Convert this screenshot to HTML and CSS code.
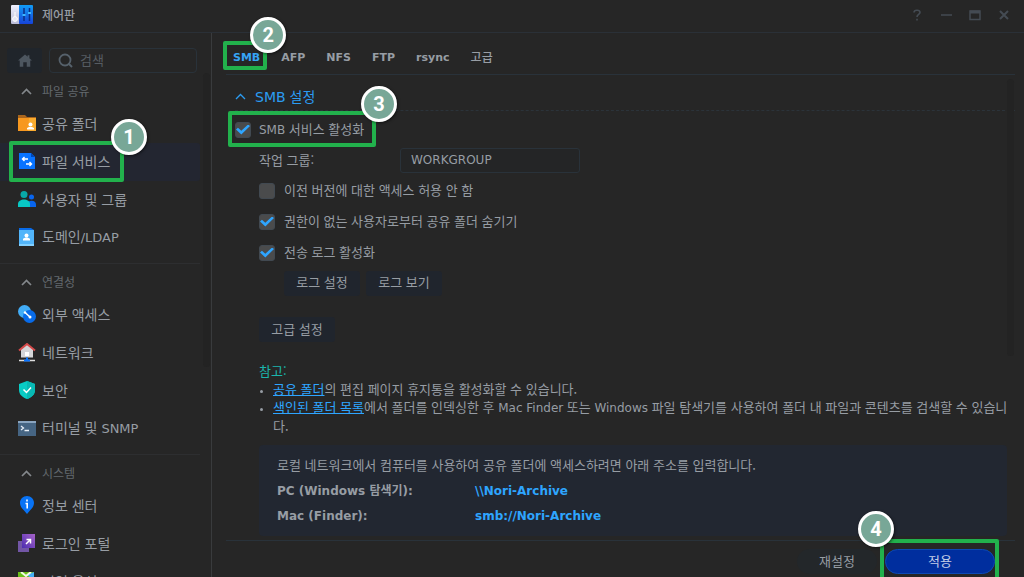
FILE: index.html
```html
<!DOCTYPE html>
<html lang="ko">
<head>
  <meta charset="UTF-8">
  <meta name="viewport" content="width=device-width, initial-scale=1.0">
  <title>제어판</title>
  <link rel="stylesheet" href="styles.css">
</head>
<body>
  <header class="titlebar">
    <svg class="app-icon" width="22" height="20" viewBox="0 0 22 20">
      <defs>
        <linearGradient id="appBlue" x1="0" y1="0" x2="0" y2="1"><stop offset="0" stop-color="#119cf5"/><stop offset="1" stop-color="#1743d8"/></linearGradient>
        <linearGradient id="appWhite" x1="0" y1="0" x2="0" y2="1"><stop offset="0" stop-color="#f0f1ff"/><stop offset="1" stop-color="#b9bbd6"/></linearGradient>
      </defs>
      <rect x="0" y="0" width="9" height="19" rx="1" fill="url(#appWhite)"/>
      <rect x="8" y="0" width="14" height="19" rx="1" fill="url(#appBlue)"/>
      <path d="M4 7v5" stroke="#fff" stroke-width="1"/>
      <circle cx="4" cy="14" r="2.4" fill="#e4e5f4" stroke="#fff"/>
      <path d="M13 3v13M18.500 3v13" stroke="#0c2c83" stroke-width="1.500"/>
      <path d="M11.500 10h3M17 8h3" stroke="#3db8ff" stroke-width="2"/>
    </svg>
    <h1>제어판</h1>
    <div class="window-buttons">
      <button type="button" aria-label="도움말"><svg width="12" height="12" viewBox="0 0 12 12"><path d="M3 3.500C3 .5 9 .5 9 3.500c0 2-3 2-3 4.500M6 9.800v1.600" fill="none" stroke="currentColor" stroke-width="1.600"/></svg></button>
      <button type="button" aria-label="최소화"><svg width="12" height="12" viewBox="0 0 12 12"><path d="M1 6h11" stroke="currentColor" stroke-width="1.500"/></svg></button>
      <button type="button" aria-label="최대화"><svg width="12" height="12" viewBox="0 0 12 12"><path d="M1 2h10v8.500H1z" fill="none" stroke="currentColor" stroke-width="1.500"/><path d="M1 3h10" stroke="currentColor" stroke-width="3"/></svg></button>
      <button type="button" aria-label="닫기"><svg width="12" height="12" viewBox="0 0 12 12"><path d="M2 2l8 8M10 2l-8 8" stroke="currentColor" stroke-width="2"/></svg></button>
    </div>
  </header>

  <div class="window">
    <aside class="sidebar">
      <div class="toolbar">
        <button type="button" class="home" aria-label="홈"><svg width="14" height="13" viewBox="0 0 16 14"><path d="M8 0L0 7h2v7h4V9h4v5h4V7h2l-3-2.600V1h-2v1.600z" fill="currentColor"/></svg></button>
        <label class="search">
          <svg width="15" height="15" viewBox="0 0 15 15"><circle cx="7" cy="7" r="5.500" fill="none" stroke="currentColor" stroke-width="1.800"/><path d="M10.500 10.500l3.500 3.500" stroke="currentColor" stroke-width="2"/></svg>
          <input type="search" placeholder="검색" aria-label="검색">
        </label>
      </div>

      <nav class="menu">
        <section>
          <h2><svg width="11" height="7" viewBox="0 0 11 7"><path d="M1 6l4.500-4.500L10 6" fill="none" stroke="currentColor" stroke-width="1.700"/></svg>파일 공유</h2>
          <a href="#share">
            <svg width="18" height="18" viewBox="0 0 18 18"><path d="M0 1h7l2 2h9v3H0z" fill="#a9651d"/><path d="M0 4h18v13H0z" fill="#f7981f"/><path d="M11 4h7v13h-8z" fill="#faac2f"/><circle cx="12.500" cy="10.500" r="2" fill="#fff"/><path d="M9 15.500v-1.500c1-1.500 6-1.500 7 0v1.500z" fill="#fff"/></svg>
            공유 폴더</a>
          <a href="#service" class="active">
            <svg width="18" height="18" viewBox="0 0 18 18"><path d="M1 2V1h8v2z" fill="#0750c5"/><path d="M1 1h12l4 4v12H1z" fill="#0873ff"/><path d="M13 1l4 4h-4z" fill="#0047b8"/><path d="M10 7H5M6.500 5L4.500 7l2 2M8 12h5M11.500 10l2 2-2 2" fill="none" stroke="#fff" stroke-width="1.400"/></svg>
            파일 서비스
            <span class="callout callout-menu"><b class="badge">1</b></span></a>
          <a href="#users">
            <svg width="18" height="18" viewBox="0 0 18 18"><circle cx="13.500" cy="7" r="2.500" fill="#0865ef"/><path d="M10 17v-5c4-2.500 8-.5 8 2.500V17z" fill="#0865ef"/><circle cx="6" cy="4.500" r="3.500" fill="#08a8a8"/><path d="M0 17v-3c0-6 12-6 12 0v3z" fill="#08c8c4"/></svg>
            사용자 및 그룹</a>
          <a href="#domain">
            <svg width="18" height="18" viewBox="0 0 18 18"><path d="M1 0h12l3 2v15H1z" fill="#086be8"/><path d="M1 2h15v16H1z" fill="#52b5fa"/><path d="M1 16h15v2H1z" fill="#83d0ff"/><circle cx="8.500" cy="7.500" r="2" fill="#fff"/><path d="M5 12.500V11c1.500-2 5.500-2 7 0v1.500z" fill="#fff"/></svg>
            <span>도메인<span class="latin">/LDAP</span></span></a>
        </section>

        <section>
          <h2><svg width="11" height="7" viewBox="0 0 11 7"><path d="M1 6l4.500-4.500L10 6" fill="none" stroke="currentColor" stroke-width="1.700"/></svg>연결성</h2>
          <a href="#external">
            <svg width="18" height="18" viewBox="0 0 18 18"><circle cx="6.500" cy="6.500" r="6.500" fill="#42adf7"/><circle cx="11.500" cy="11.500" r="6.500" fill="#086be9"/><path d="M7 7.500l5 4.500" stroke="#fff" stroke-width="1.500"/><circle cx="7" cy="7.500" r="1.200" fill="#fff"/><circle cx="12" cy="12" r="1.500" fill="#fff"/></svg>
            외부 액세스</a>
          <a href="#network">
            <svg width="18" height="19" viewBox="0 0 18 19"><path d="M3 6l6-5 6 5v8.500H3z" fill="#d4d5d8"/><path d="M1 7.500L9 1l8 6.500" fill="none" stroke="#d54a4a" stroke-width="2"/><path d="M7 9h4v4H7z" fill="#fff"/><path d="M1 17.500h16" stroke="#ddd" stroke-width="1.500"/><path d="M8 14.500h2v2h2v2H6v-2h2z" fill="#0873ff"/></svg>
            네트워크</a>
          <a href="#security">
            <svg width="18" height="18" viewBox="0 0 18 18"><path d="M9 0l8 3v6c0 5-4 7.500-8 9-4-1.500-8-4-8-9V3z" fill="#09ccc5"/><path d="M9 0l8 3v6c0 5-4 7.500-8 9z" fill="#08b9b4"/><path d="M5.500 8.500L8.500 11.500l4.500-5" fill="none" stroke="#fff" stroke-width="1.500"/></svg>
            보안</a>
          <a href="#terminal">
            <svg width="18" height="18" viewBox="0 0 18 18"><path d="M0 2h18v15H0z" fill="#466583"/><path d="M0 2h18v2H0z" fill="#8aa5c0"/><path d="M3 7l2.500 2L3 11M6.500 11.500H11" fill="none" stroke="#e6edf5" stroke-width="1.300"/></svg>
            <span>터미널 및 <span class="latin">SNMP</span></span></a>
        </section>

        <section>
          <h2><svg width="11" height="7" viewBox="0 0 11 7"><path d="M1 6l4.500-4.500L10 6" fill="none" stroke="currentColor" stroke-width="1.700"/></svg>시스템</h2>
          <a href="#info">
            <svg width="18" height="18" viewBox="0 0 18 18"><path d="M9 0c4 0 7 3 7 7 0 3.500-2.500 6-4.500 8L9 18l-2.500-3C4.500 13 2 10.500 2 7c0-4 3-7 7-7z" fill="#0873f5"/><path d="M9 3.500v2M7.500 7.500H9.200V12.500" fill="none" stroke="#fff" stroke-width="1.600"/></svg>
            정보 센터</a>
          <a href="#portal">
            <svg width="18" height="18" viewBox="0 0 18 18"><defs><linearGradient id="portal" x1="0" y1="1" x2="1" y2="0"><stop offset="0" stop-color="#4b2db0"/><stop offset="1" stop-color="#a763c8"/></linearGradient></defs><path d="M0 7h11v11H0z" fill="#7256a5"/><path d="M4 0h13v14H4z" fill="url(#portal)"/><path d="M8 10l4.500-4.500M8.500 5.500h4v4" fill="none" stroke="#fff" stroke-width="1.500"/></svg>
            로그인 포털</a>
          <a href="#region">
            <svg width="18" height="18" viewBox="0 0 18 18"><path d="M0 0h16v17H0z" fill="#69bd18"/><path d="M9 3l7-3v8z" fill="#45aef5"/><path d="M3 0l5 4 5-4" fill="none" stroke="#f3f8e6" stroke-width="2"/></svg>
            지역 옵션</a>
        </section>
      </nav>
      <div class="scrollbar"></div>
    </aside>

    <main class="content">
      <nav class="tabs">
        <a href="#smb" class="active">SMB<span class="callout callout-tab"><b class="badge">2</b></span></a>
        <a href="#afp">AFP</a>
        <a href="#nfs">NFS</a>
        <a href="#ftp">FTP</a>
        <a href="#rsync">rsync</a>
        <a href="#advanced">고급</a>
      </nav>

      <form class="panel">
        <h2><svg width="11" height="7" viewBox="0 0 11 7"><path d="M1 6l4.500-4.500L10 6" fill="none" stroke="currentColor" stroke-width="1.300"/></svg><span><span class="latin">SMB</span> 설정</span></h2>

        <div class="row check">
          <input type="checkbox" id="smb" checked>
          <label for="smb"><span class="latin">SMB</span> 서비스 활성화</label>
          <span class="callout callout-check"><b class="badge">3</b></span>
        </div>
        <div class="options">
          <div class="row field">
            <label for="workgroup">작업 그룹:</label>
            <input type="text" id="workgroup" value="WORKGROUP">
          </div>
          <div class="row check">
            <input type="checkbox" id="previous">
            <label for="previous">이전 버전에 대한 액세스 허용 안 함</label>
          </div>
          <div class="row check">
            <input type="checkbox" id="hide" checked>
            <label for="hide">권한이 없는 사용자로부터 공유 폴더 숨기기</label>
          </div>
          <div class="row check">
            <input type="checkbox" id="log" checked>
            <label for="log">전송 로그 활성화</label>
          </div>
          <div class="row log-buttons">
            <button type="button" class="button">로그 설정</button>
            <button type="button" class="button">로그 보기</button>
          </div>
          <button type="button" class="button advanced">고급 설정</button>

          <div class="note">
            <strong>참고:</strong>
            <ul>
              <li><a href="#share">공유 폴더</a>의 편집 페이지 휴지통을 활성화할 수 있습니다.</li>
              <li><a href="#index">색인된 폴더 목록</a>에서 폴더를 인덱싱한 후 <span class="latin">Mac Finder</span> 또는 <span class="latin">Windows</span> 파일 탐색기를 사용하여 폴더 내 파일과 콘텐츠를 검색할 수 있습니다.</li>
            </ul>
          </div>

          <div class="address">
            <p>로컬 네트워크에서 컴퓨터를 사용하여 공유 폴더에 액세스하려면 아래 주소를 입력합니다.</p>
            <dl>
              <dt>PC (Windows 탐색기):</dt>
              <dd>\\Nori-Archive</dd>
              <dt>Mac (Finder):</dt>
              <dd>smb://Nori-Archive</dd>
            </dl>
          </div>
        </div>
      </form>

      <footer class="actions">
        <button type="button" class="button reset">재설정</button>
        <div class="apply-wrap">
          <button type="button" class="button apply">적용</button>
          <span class="callout callout-apply"><b class="badge">4</b></span>
        </div>
      </footer>
      <div class="scrollbar"></div>
    </main>
  </div>
</body>
</html>
```
FILE: styles.css
```css
* {
  box-sizing: border-box;
}
body {
  display: flex;
  flex-direction: column;
  height: 100vh;
  margin: 0;
  overflow: hidden;
  background: #262626;
  color: #979da4;
  font: 13px/18px "Noto Sans CJK KR", sans-serif;
}
h1, h2, p, ul, dl, dd {
  margin: 0;
  padding: 0;
}
svg {
  flex-shrink: 0;
}
a {
  color: inherit;
  text-decoration: none;
}
button, input {
  font: inherit;
  color: inherit;
}
button {
  padding: 0;
  border: 0;
  background: none;
}
.latin {
  font-family: "DejaVu Sans", sans-serif;
  font-size: 12px;
}

/* title bar */
.titlebar {
  display: flex;
  flex-shrink: 0;
  align-items: center;
  gap: 9px;
  height: 33px;
  padding: 0 14px 2px 11px;
  border-bottom: 1px solid #2a3037;
}
.titlebar h1 {
  font-size: 12px;
  font-weight: 500;
}
.window-buttons {
  display: flex;
  gap: 17px;
  margin-left: auto;
  color: #444b53;
}
.window-buttons button {
  display: flex;
}

/* sidebar */
.window {
  display: flex;
  flex: 1;
  min-height: 0;
}
.sidebar {
  position: relative;
  flex: 0 0 212px;
  border-right: 1px solid #393b3d;
}
.toolbar {
  display: flex;
  gap: 7px;
  padding: 15px 14px 4px 7px;
}
.home {
  display: flex;
  align-items: center;
  justify-content: center;
  width: 35px;
  height: 25px;
  border-radius: 3px;
  background: #20252b;
  color: #4d565f;
}
.search {
  display: flex;
  flex: 1;
  align-items: center;
  gap: 7px;
  height: 25px;
  padding: 0 8px;
  border: 1px solid #29323a;
  border-radius: 4px;
  color: #56616b;
}
.search input {
  width: 100%;
  padding: 0 0 2px;
  border: 0;
  outline: 0;
  background: none;
}
.search input::placeholder {
  color: #565c62;
}
.menu section {
  margin-right: 11px;
}
.menu section + section {
  margin-top: 6px;
  padding-top: 4px;
  border-top: 1px solid #2d2e30;
}
.menu h2 {
  display: flex;
  align-items: center;
  gap: 10px;
  height: 28px;
  padding-left: 21px;
  color: #63696e;
  font-size: 12px;
  font-weight: 400;
}
.menu h2 svg {
  width: 11px;
  color: #84888c;
}
.menu a {
  position: relative;
  display: flex;
  align-items: center;
  gap: 6px;
  height: 38px;
  padding: 0 0 2px 18px;
  border-radius: 0 3px 3px 0;
  font-size: 14px;
}
.menu .latin {
  font-size: 13px;
}
.menu a.active {
  background: #232631;
}
.scrollbar {
  position: absolute;
  top: 40px;
  right: 1px;
  width: 7px;
  height: 54%;
  border-radius: 4px;
  background: #232323;
}

/* main area */
.content {
  position: relative;
  display: flex;
  flex: 1;
  flex-direction: column;
  min-width: 0;
  padding: 0 9px 0 14px;
}
.tabs {
  display: flex;
  flex-shrink: 0;
  gap: 21px;
  height: 42px;
  padding: 7px 7px 0;
  border-bottom: 1px solid #29323a;
  font: bold 11px/36px "DejaVu Sans", "Noto Sans CJK KR", sans-serif;
}
.tabs a {
  position: relative;
}
.tabs a:last-child {
  font-size: 12px;
  font-weight: 500;
}
.tabs .active {
  color: #36a3f5;
}
.panel {
  flex: 1;
  min-height: 0;
}
.panel h2 {
  display: flex;
  align-items: center;
  gap: 9px;
  height: 36px;
  margin-left: 9px;
  padding-top: 8px;
  border-bottom: 1px dashed #2b333a;
  color: #2b9cf2;
  font-size: 14px;
  font-weight: 400;
}
.panel h2 .latin {
  font-size: 14px;
}
.panel > .check {
  margin: 3px 0 0 9px;
}
.row {
  position: relative;
  display: flex;
  align-items: center;
  height: 30px;
}
.check {
  gap: 8px;
  height: 31px;
}
.options .check {
  gap: 9px;
}
.check label {
  padding-bottom: 1px;
}
.check input {
  display: grid;
  place-content: center;
  width: 16px;
  height: 16px;
  margin: 0;
  border: 1px solid #414951;
  border-radius: 3px;
  background: #4a4b4c;
  appearance: none;
}
.check input:checked::before {
  content: "";
  width: 14px;
  height: 10px;
  background: #2ea5ff;
  clip-path: polygon(0 50%, 14% 32%, 38% 62%, 86% 0, 100% 14%, 38% 100%);
}
.options {
  margin-left: 33px;
}
.field label {
  width: 141px;
}
.field input {
  width: 180px;
  height: 25px;
  padding: 0 10px;
  border: 1px solid #29323a;
  border-radius: 3px;
  outline: 0;
  background: #242526;
  font: 12px "DejaVu Sans", sans-serif;
}
.log-buttons {
  gap: 6px;
  padding-left: 25px;
}
.button {
  display: block;
  min-width: 76px;
  height: 25px;
  padding: 0 12px 2px;
  border-radius: 3px;
  background: #20252d;
}
.advanced {
  margin-top: 19px;
}
.note {
  margin-top: 20px;
}
.note strong {
  display: block;
  color: #1bb5ad;
  font-weight: 400;
}
.note ul {
  padding-left: 14px;
}
.note li::marker {
  font-size: 9px;
}
.note a {
  color: #2ea5ff;
  text-decoration: underline;
}
.address {
  margin: 10px 8px 0 0;
  padding: 7px 18px;
  border-radius: 4px;
  background: #222731;
}
.address p {
  line-height: 25px;
}
.address dl {
  display: grid;
  grid-template-columns: 198px 1fr;
  padding-top: 2px;
  font: bold 12px/25px "DejaVu Sans", "Noto Sans CJK KR", sans-serif;
}
.address dd {
  color: #2ea5ff;
}
.actions {
  display: flex;
  flex-shrink: 0;
  gap: 8px;
  height: 37px;
  padding: 8px 20px 0 0;
  border-top: 1px solid #29323a;
  justify-content: flex-end;
}
.actions .button {
  border-radius: 13px;
}
.actions .reset {
  width: 80px;
  background: #23272a;
}
.actions .apply {
  width: 110px;
  border: 1px solid #0c49b5;
  background: #002e9e;
  color: #c4cee6;
}
.apply-wrap {
  position: relative;
}
.content > .scrollbar {
  top: 46px;
  right: 10px;
  height: 51%;
}

/* numbered callouts laid over the controls */
.callout {
  position: absolute;
  z-index: 1;
  border: 4px solid #22b14c;
  border-radius: 2px;
  pointer-events: none;
}
.callout-menu {
  inset: -2px 76px -1px 9px;
}
.callout-tab {
  inset: 1px -7px 4px -10px;
}
.callout-check {
  top: -3px;
  left: -7px;
  width: 148px;
  height: 36px;
}
.callout-apply {
  inset: -10px -4px -4px -5px;
}
.badge {
  position: absolute;
  top: -26px;
  right: -27px;
  width: 36px;
  height: 36px;
  border: 3px solid #fff;
  border-radius: 50%;
  background: #78a797;
  box-shadow: 1px 1px 3px #0008;
  color: #fff;
  font: bold 20px/30px Roboto, sans-serif;
  text-align: center;
}
.callout-tab .badge {
  right: -23px;
  top: -28px;
}
.callout-check .badge {
  right: -25px;
  top: -29px;
}
.callout-apply .badge {
  right: auto;
  left: -26px;
  top: -32px;
}
```
